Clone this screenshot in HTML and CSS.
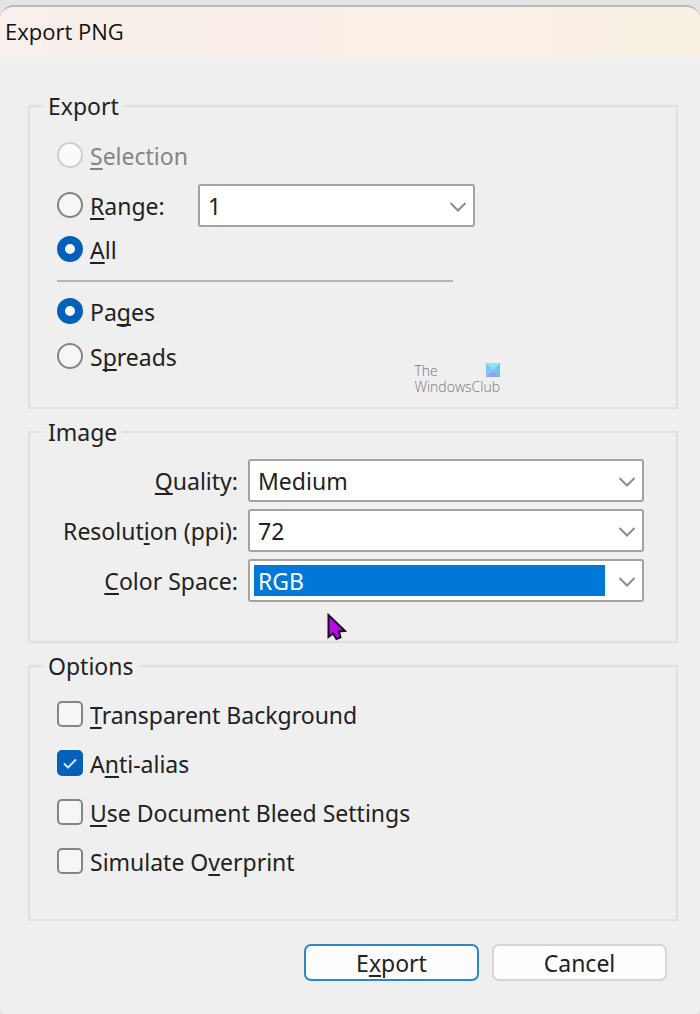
FILE: index.html
```html
<!DOCTYPE html>
<html lang="en">
<head>
    <meta charset="UTF-8">
    <meta name="viewport" content="width=device-width, initial-scale=1">
    <title>Export PNG</title>
    <link rel="stylesheet" href="styles.css">
</head>
<body>
    <form class="dialog">
        <header class="title-bar">
            <h1>Export PNG</h1>
        </header>

        <div class="dialog-body">
            <fieldset class="export-group">
                <legend>Export</legend>

                <div class="row">
                    <input type="radio" name="range" id="selection" disabled>
                    <label for="selection"><u>S</u>election</label>
                </div>
                <div class="row range-row">
                    <input type="radio" name="range" id="range">
                    <label for="range"><u>R</u>ange:</label>
                    <div class="select-box">
                        <select aria-label="Page range">
                            <option>1</option>
                        </select>
                        <svg class="chevron" viewBox="0 0 18 12"><path d="M1.500 2 L9 9.500 L16.500 2"/></svg>
                    </div>
                </div>
                <div class="row">
                    <input type="radio" name="range" id="all" checked>
                    <label for="all"><u>A</u>ll</label>
                </div>

                <hr>

                <div class="row">
                    <input type="radio" name="layout" id="pages" checked>
                    <label for="pages">Pa<u>g</u>es</label>
                </div>
                <div class="row spreads-row">
                    <input type="radio" name="layout" id="spreads">
                    <label for="spreads">S<u>p</u>reads</label>
                </div>

                <div class="watermark">
                    <span>The</span>
                    <svg class="watermark-logo" viewBox="0 0 14 14">
                        <rect width="14" height="14" fill="#8de4f7"/>
                        <path d="M0 0 L7 7 L0 14 Z" fill="#7bc8f0"/>
                        <path d="M14 0 L7 7 L14 14 Z" fill="#73c3f0"/>
                        <path d="M0 14 L7 7 L14 14 Z" fill="#8fa5e6"/>
                    </svg>
                    <span class="watermark-name">WindowsClub</span>
                </div>
            </fieldset>

            <fieldset class="image-group">
                <legend>Image</legend>

                <label for="quality"><u>Q</u>uality:</label>
                <div class="select-box">
                    <select id="quality">
                        <option>Medium</option>
                    </select>
                    <svg class="chevron" viewBox="0 0 18 12"><path d="M1.500 2 L9 9.500 L16.500 2"/></svg>
                </div>

                <label for="resolution">Resolut<u>i</u>on (ppi):</label>
                <div class="select-box">
                    <select id="resolution">
                        <option>72</option>
                    </select>
                    <svg class="chevron" viewBox="0 0 18 12"><path d="M1.500 2 L9 9.500 L16.500 2"/></svg>
                </div>

                <label for="colorSpace"><u>C</u>olor Space:</label>
                <div class="select-box">
                    <select id="colorSpace" class="selected">
                        <option>RGB</option>
                    </select>
                    <svg class="chevron" viewBox="0 0 18 12"><path d="M1.500 2 L9 9.500 L16.500 2"/></svg>
                </div>

                <svg class="cursor" viewBox="0 0 20 28">
                    <path d="M1.500 2 L1.500 24 L6 20.500 L9.500 26 L13.500 24.500 L12 18.500 L18 18 Z"/>
                </svg>
            </fieldset>

            <fieldset class="options-group">
                <legend>Options</legend>

                <div class="row">
                    <input type="checkbox" id="transparent">
                    <label for="transparent"><u>T</u>ransparent Background</label>
                </div>
                <div class="row">
                    <span class="check-box">
                        <input type="checkbox" id="antiAlias" checked>
                        <svg class="tick" viewBox="0 0 26 26"><path d="M7 13.500 L11 17.500 L19 9.500"/></svg>
                    </span>
                    <label for="antiAlias">A<u>n</u>ti-alias</label>
                </div>
                <div class="row">
                    <input type="checkbox" id="bleed">
                    <label for="bleed"><u>U</u>se Document Bleed Settings</label>
                </div>
                <div class="row">
                    <input type="checkbox" id="overprint">
                    <label for="overprint">Simulate O<u>v</u>erprint</label>
                </div>
            </fieldset>

            <div class="buttons">
                <button type="button" class="primary">E<u>x</u>port</button>
                <button type="button">Cancel</button>
            </div>
        </div>
    </form>
</body>
</html>
```
FILE: styles.css
```css
* {
    box-sizing: border-box;
}

body {
    margin: 0;
    padding-top: 5px;
    min-height: 100vh;
    display: flex;
    background-color: #e4e4e4;
    color: #222;
    font-family: Tahoma, "Noto Sans", sans-serif;
    font-size: 23px;
    line-height: 28px;
}

.dialog {
    flex: 1;
    min-width: 0;
    background-color: #efefef;
    border-top: 2px solid #bababa;
    border-radius: 14px 14px 8px 8px;
    overflow: hidden;
}

.title-bar {
    height: 51px;
    padding: 10px 5px;
    background: linear-gradient(to right, #f9efeb, #f9f0e4);
}

h1 {
    margin: 0;
    color: #111;
    font-family: "Segoe UI", "Open Sans", sans-serif;
    font-size: 22px;
    font-weight: normal;
    line-height: 28px;
}

.dialog-body {
    padding: 33px 22px 34px 28px;
}

fieldset {
    position: relative;
    min-width: 0;
    margin: 0 0 8px;
    border: 2px solid #e0e0e0;
}

legend {
    margin-left: -14px;
    padding: 0 5px;
    line-height: 30px;
}

u {
    text-decoration-thickness: 2px;
    text-underline-offset: 3px;
    text-decoration-skip-ink: none;
}

.row {
    display: flex;
    align-items: center;
    gap: 7px;
    min-height: 28px;
}

input {
    appearance: none;
    flex: none;
    display: block;
    width: 26px;
    height: 26px;
    margin: 0 0 2px;
    border: 2px solid #858585;
    background-color: #f6f6f6;
}

input[type="radio"] {
    border-radius: 50%;
}

input[type="radio"]:checked {
    border: 8px solid #0560b9;
    background-color: #fff;
}

input[type="radio"]:disabled {
    border-color: #cfcfcf;
    background-color: #fafafa;
}

input:disabled + label {
    color: #858585;
}

input[type="checkbox"] {
    border-radius: 5px;
}

input[type="checkbox"]:checked {
    border-color: #0560b9;
    background-color: #0560b9;
}

.check-box {
    position: relative;
}

.tick {
    position: absolute;
    top: 0;
    left: 0;
    width: 26px;
    height: 26px;
    fill: none;
    stroke: #cfe4f7;
    stroke-width: 2;
    pointer-events: none;
}

/* drop-downs */
.select-box {
    position: relative;
    min-width: 0;
}

select {
    appearance: none;
    display: block;
    width: 100%;
    height: 43px;
    padding: 0 40px 0 8px;
    border: 2px solid #a3a3a3;
    border-radius: 3px;
    background-color: #fff;
    color: #222;
    font: inherit;
}

select.selected {
    background: linear-gradient(#0078d7, #0078d7) no-repeat 4px 4px / calc(100% - 41px) calc(100% - 8px) #fff;
    color: #fff;
}

.chevron {
    position: absolute;
    top: 17px;
    right: 8px;
    width: 18px;
    height: 12px;
    fill: none;
    stroke: #8c8c8c;
    stroke-width: 2;
    pointer-events: none;
}

/* Export */
.export-group {
    padding: 21px 32px 36px 27px;
}

.range-row {
    margin: 14px 0 9px;
}

.range-row label {
    width: 101px;
}

.range-row .select-box {
    width: 277px;
}

hr {
    width: 396px;
    max-width: 100%;
    margin: 16px 0;
    border: 0;
    border-top: 2px solid #b5b5b5;
}

.spreads-row {
    margin-top: 17px;
}

.watermark {
    position: absolute;
    right: 176px;
    bottom: 12px;
    display: grid;
    grid-template-columns: 1fr auto;
    color: #777;
    font-family: "Segoe UI", "Open Sans", sans-serif;
    font-size: 14px;
    font-weight: 300;
    line-height: 16px;
}

.watermark-logo {
    width: 14px;
    height: 14px;
}

.watermark-name {
    grid-column: 1 / 3;
}

/* Image */
.image-group {
    display: grid;
    grid-template-columns: 181px 1fr;
    align-items: center;
    gap: 7px 10px;
    padding: 12px 32px 39px 27px;
}

.image-group label {
    text-align: right;
    white-space: nowrap;
}

.cursor {
    position: absolute;
    left: 297px;
    bottom: 0;
    width: 20px;
    height: 28px;
    fill: #b60ae8;
    stroke: #1a1020;
    stroke-width: 2;
}

/* Options */
.options-group {
    padding: 20px 32px 43px 27px;
}

.options-group .row + .row {
    margin-top: 21px;
}

.buttons {
    display: flex;
    justify-content: flex-end;
    gap: 13px;
    padding: 15px 11px 0 0;
}

button {
    width: 175px;
    height: 37px;
    padding: 0;
    border: 2px solid #d6d6d6;
    border-radius: 7px;
    background-color: #fdfdfd;
    color: #222;
    font: inherit;
}

button.primary {
    border-color: #2f86c5;
}
```
